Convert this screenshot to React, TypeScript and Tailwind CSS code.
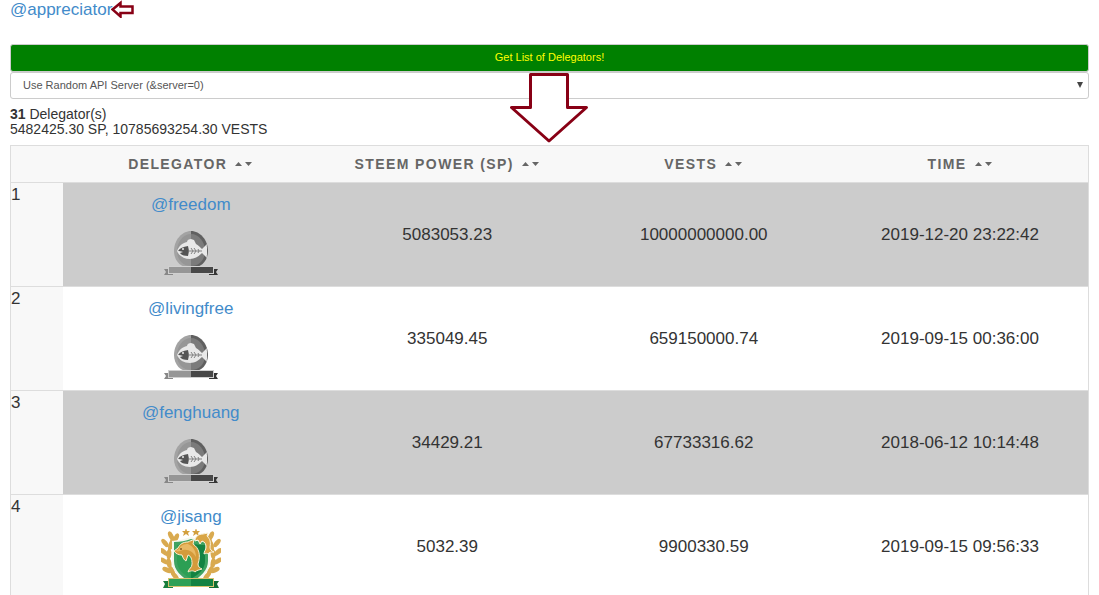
import { useState } from 'react'

type Delegator = { name: string; sp: string; vests: string; time: string; level: 'minnow' | 'dolphin' }

const DELEGATORS: Delegator[] = [
  { name: 'freedom', sp: '5083053.23', vests: '10000000000.00', time: '2019-12-20 23:22:42', level: 'minnow' },
  { name: 'livingfree', sp: '335049.45', vests: '659150000.74', time: '2019-09-15 00:36:00', level: 'minnow' },
  { name: 'fenghuang', sp: '34429.21', vests: '67733316.62', time: '2018-06-12 10:14:48', level: 'minnow' },
  { name: 'jisang', sp: '5032.39', vests: '9900330.59', time: '2019-09-15 09:56:33', level: 'dolphin' },
]

const COLUMNS = ['Delegator', 'Steem Power (SP)', 'Vests', 'Time']

// x, y and angle of the leaves in the left half of the wreath
const LEAVES = [
  [10, 7, 65], [4, 14, 50], [3, 23, 40], [3, 32, 30], [6, 41, 25],
  [15, 9, 115], [10, 16, 105], [8, 25, 95], [8, 34, 80], [11, 42, 65], [14, 47, 50],
]

function MinnowBadge() {
  return (
    <svg width="60" height="60" viewBox="0 0 60 60" className="mx-auto block" aria-hidden="true">
      <path d="M30 14c-9 0-17 9-17 20 0 9 6 17 17 17z" fill="#a3a3a3" />
      <path d="M30 14c9 0 17 9 17 20 0 9-6 17-17 17z" fill="#606060" />
      <path d="M30 17c-8 0-14 8-14 17s6 15 14 15z" fill="#969696" />
      <path d="M30 17c8 0 14 8 14 17s-6 15-14 15z" fill="#7b7b7b" />
      <path d="M16 34c2-5 5-8 10-9 0-2 2-3 4-3l3 1 2 4c3 2 4 3 6 5l5-5-1 7 1 7-5-5c-3 3-7 6-12 6-6 0-11-3-13-8z" fill="#e8e8e8" />
      <path d="M17 34c2-3 5-4 10-5l1 5-1 5c-4 0-7-1-8-3l3-1c-2-1-4-1-5-1z" fill="#555" />
      <circle cx="22" cy="32" r="1" fill="#e8e8e8" />
      <path d="M27 34h14M30 31l2 3-2 3M33 31l2 3-2 3M37 32l1 2-1 2" fill="none" stroke="#828282" />
      <path d="M46 29l-5 5 5 5z" fill="#e8e8e8" />
      <path d="M3 52h9v6H3l2-3z" fill="#878787" />
      <path d="M57 52h-9v6h9l-2-3z" fill="#353535" />
      <path d="M7 49h46v8H7z" fill="#d0d0d0" />
      <path d="M8 50h22v6H8z" fill="#969696" />
      <path d="M30 50h22v6H30z" fill="#484848" />
    </svg>
  )
}

function Laurel() {
  return (
    <g>
      <path d="M12 7C5 21 6 38 17 51" fill="none" stroke="#c99638" strokeWidth="1.500" />
      {LEAVES.map(([x, y, angle]) => (
        <ellipse key={`${x}-${y}`} cx={x} cy={y} rx="5" ry="2.400" transform={`rotate(${angle} ${x} ${y})`} fill="#d9aa50" />
      ))}
    </g>
  )
}

function DolphinBadge() {
  return (
    <svg width="60" height="60" viewBox="0 0 60 60" className="mx-auto block" aria-hidden="true">
      <Laurel />
      <g transform="translate(60 0) scale(-1 1)"><Laurel /></g>
      <path d="M30 8c6 2 12 3 19 4v20c0 11-8 18-19 23-11-5-19-12-19-23V12c7-1 13-2 19-4z" fill="#f5f8ee" />
      <path d="M30 10c5 2 11 3 17 3v19c0 9-7 16-17 21-10-5-17-12-17-21V13c6 0 12-1 17-3z" fill="#3fa362" />
      <path d="M30 14c5 2 9 2 14 2v16c0 8-6 13-14 18-8-5-14-10-14-18V16c5 0 9 0 14-2z" fill="#2c9f54" />
      <path d="M30 14c5 2 9 2 14 2v16c0 8-6 13-14 18z" fill="#138342" />
      <path d="M25 -1l1 3h3l-2 2 1 3-3-2-3 2 1-3-2-2h3zM35 -1l1 3h3l-2 2 1 3-3-2-3 2 1-3-2-2h3z" fill="#d3a03f" />
      <path d="M34 12c0-4 3-7 8-7l5-1-1 3c3 3 4 6 3 11 0 2 1 4 4 5-3 0-5 0-6 2-1-1-2-1-4 0 0-3 2-4 2-7s-1-5-4-6l-2 3-2-4z" fill="#d9a545" stroke="#faf4df" />
      <path d="M13 22l4-3c2-4 5-6 10-6 2-1 4-2 6-2l-1 4c6 4 8 11 5 20 0 3 2 4 4 5-3 1-5 1-7 3-2-2-5-1-7 0 1-4 4-4 4-8 0-5-1-8-4-9l-2 6c-2-1-3-3-4-6-3 0-6-1-8-4z" fill="#d49b3b" stroke="#faf0d2" />
      <path d="M14 22l4-2c2-4 5-5 9-5 5 2 8 7 8 13-3-5-7-8-13-7-3 1-5 2-8 1z" fill="#e8b964" />
      <circle cx="20" cy="20" r="1" fill="#885d20" />
      <path d="M2 52h10v7H2l2-4z" fill="#187e3d" />
      <path d="M58 52H48v7h10l-2-4z" fill="#116c32" />
      <path d="M7 49h46v9H7z" fill="#d8c26e" />
      <path d="M8 50h22v7H8z" fill="#2da056" />
      <path d="M30 50h22v7H30z" fill="#138342" />
    </svg>
  )
}

export default function App() {
  const [server, setServer] = useState('0')

  return (
    <div className="h-screen overflow-hidden bg-white px-[10px] font-['Liberation_Sans',Arial,sans-serif] text-sm text-[#333]">
      <div className="flex h-11 items-start">
        <a href="#appreciator" className="text-[17px] leading-5 text-[#428bca]">@appreciator</a>
        <svg width="24" height="18" viewBox="0 0 24 18" className="-ml-px shrink-0" aria-hidden="true">
          <path d="M1.500 9.500L9.500 3v3.500h12v6.500h-12v3.500z" fill="#fff" stroke="#880015" strokeWidth="2.500" />
        </svg>
      </div>

      <div className="relative">
        <button type="button" className="block h-7 w-full rounded-[3px] border border-[#ccc] bg-[#008000] text-[11px] text-[#ff0]">
          Get List of Delegators!
        </button>
        <div className="relative">
          <select
            aria-label="API server"
            value={server}
            onChange={e => setServer(e.target.value)}
            className="block h-[27px] w-full appearance-none rounded-[3px] border border-[#ccc] bg-white px-3 text-[11px] text-[#555]"
          >
            <option value="0">Use Random API Server (&amp;server=0)</option>
          </select>
          <svg width="6" height="6" viewBox="0 0 6 6" className="pointer-events-none absolute top-[10px] right-[6px]" aria-hidden="true">
            <path d="M0 0h6L3 6z" fill="#444" />
          </svg>
        </div>
        {/* Arrow from the button to the results */}
        <svg width="80" height="72" viewBox="0 0 80 72" className="pointer-events-none absolute top-[28px] left-1/2 -translate-x-1/2" aria-hidden="true">
          <path d="M20.500 2.500h37v33h19L39 69 1.500 35.500h19z" fill="#fff" stroke="#880015" strokeWidth="3" strokeLinejoin="round" />
        </svg>
      </div>

      <div className="py-2 leading-[15px]">
        <p><b>31</b> Delegator(s)</p>
        <p>5482425.30 SP, 10785693254.30 VESTS</p>
      </div>

      <table className="w-full table-fixed border-collapse border border-[#ddd] text-center text-[17px]">
        <thead>
          <tr className="h-[37px] border-b border-[#ddd] bg-[#f8f8f8] text-sm tracking-widest text-[#666] uppercase">
            <th className="w-[52px]" aria-label="Rank" />
            {COLUMNS.map(col => (
              <th key={col} className="p-0">
                <span className="inline-flex items-center gap-2">
                  {col}
                  <svg width="18" height="6" viewBox="0 0 18 6" aria-hidden="true">
                    <path d="M0 5l3.500-4L7 5zM10 1h7l-3.500 4z" fill="#666" />
                  </svg>
                </span>
              </th>
            ))}
          </tr>
        </thead>
        <tbody>
          {DELEGATORS.map((d, i) => (
            <tr key={d.name} className="h-[104px] border-b border-[#ddd] odd:bg-[#ccc]">
              <td className="bg-[#f8f8f8] text-left align-top leading-6">{i + 1}</td>
              <td className="pt-[10px] align-top">
                <a href={`#${d.name}`} className="block leading-6 text-[#428bca]">@{d.name}</a>
                {d.level === 'minnow' ? <MinnowBadge /> : <DolphinBadge />}
              </td>
              <td className="pt-px">{d.sp}</td>
              <td className="pt-px">{d.vests}</td>
              <td className="pt-px">{d.time}</td>
            </tr>
          ))}
        </tbody>
      </table>
    </div>
  )
}
